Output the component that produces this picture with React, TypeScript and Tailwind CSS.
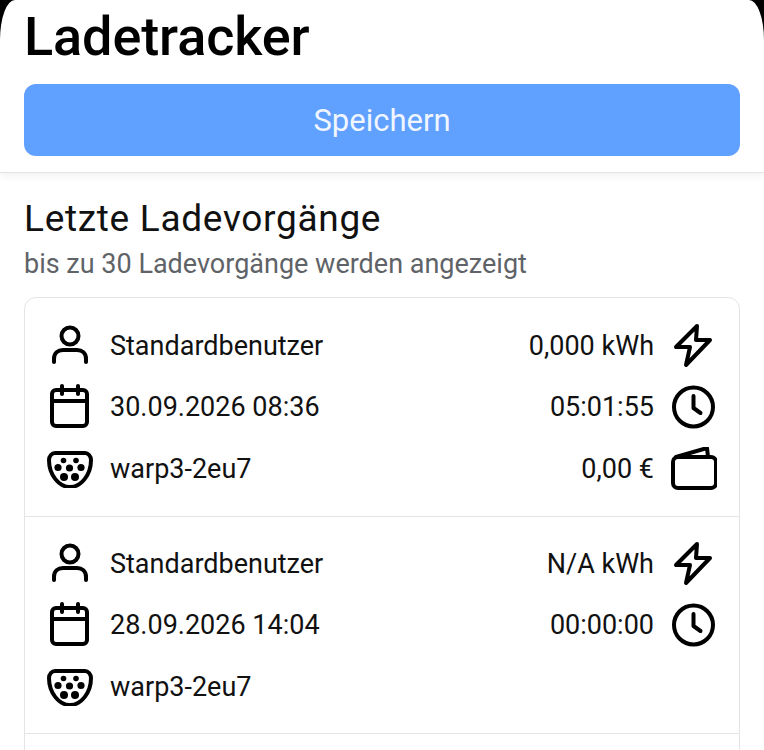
import type { ReactNode } from "react";

function UserIcon() {
  return (
    <svg width="46" height="46" viewBox="0 1 46 46" fill="none" stroke="#000" strokeWidth="4" strokeLinecap="round" strokeLinejoin="round">
      <circle cx="23" cy="14" r="8.5" />
      <path d="M7 40v-3c0-6 4-9 9-9h14c5 0 9 3 9 9v3" />
    </svg>
  );
}

function CalendarIcon() {
  return (
    <svg width="46" height="46" viewBox="0 0 46 46" fill="none" stroke="#000" strokeWidth="4" strokeLinecap="round" strokeLinejoin="round">
      <rect x="5" y="6" width="35" height="36" rx="4" />
      <path d="M5 17h35M15 2v8M31 2v8" />
    </svg>
  );
}

function ConnectorIcon() {
  return (
    <svg width="46" height="38" viewBox="0 -1 46 38" fill="none">
      <path d="M8 2h30c3 0 6 3 6 7 0 15-10 27-21 27S2 24 2 9c0-4 3-7 6-7z" stroke="#000" strokeWidth="4" />
      <g fill="#000">
        <circle cx="16.5" cy="9.5" r="2.8" />
        <circle cx="29" cy="9.5" r="2.8" />
        <circle cx="11" cy="16.5" r="3.6" />
        <circle cx="22.5" cy="17" r="3.6" />
        <circle cx="34" cy="16.5" r="3.6" />
        <circle cx="17" cy="26" r="4" />
        <circle cx="28" cy="26" r="4" />
      </g>
    </svg>
  );
}

function BoltIcon() {
  return (
    <svg width="46" height="46" viewBox="0 1 46 46" fill="none" stroke="#000" strokeWidth="4" strokeLinecap="round" strokeLinejoin="round">
      <path d="M26 4L5 25h14l-4 18 24-25H25z" />
    </svg>
  );
}

function ClockIcon() {
  return (
    <svg width="46" height="46" viewBox="0 0 46 46" fill="none" stroke="#000" strokeWidth="4" strokeLinecap="round" strokeLinejoin="round">
      <circle cx="22.5" cy="23" r="19.5" />
      <path d="M22.5 12v12l7 5" />
    </svg>
  );
}

function WalletIcon() {
  return (
    <svg width="46" height="44" viewBox="0 1 46 44" fill="none" stroke="#000" strokeWidth="4" strokeLinecap="round" strokeLinejoin="round">
      <path d="M5 11L36 2l1 9" />
      <rect x="2" y="11" width="43" height="31" rx="5" />
    </svg>
  );
}

function Row({ left, leftText, rightText, right }: { left: ReactNode; leftText: string; rightText?: string; right?: ReactNode }) {
  return (
    <div className="flex h-[61.5px] items-center">
      <div className="flex w-[46px] justify-center">{left}</div>
      <span className="ml-[17px] flex-1 text-[27px] text-[#111]">{leftText}</span>
      {rightText && <span className="text-[27px] text-[#111]">{rightText}</span>}
      <div className="ml-[17px] flex w-[46px] justify-center">{right}</div>
    </div>
  );
}

const sessions = [
  { date: "30.09.2026 08:36", energy: "0,000 kWh", time: "05:01:55", cost: "0,00 €" },
  { date: "28.09.2026 14:04", energy: "N/A kWh", time: "00:00:00" },
];

export default function App() {
  return (
    <div className="h-[750px] w-[764px] overflow-hidden bg-black font-['Roboto',sans-serif]">
      <div className="h-full rounded-t-[15px_40px] bg-white">
        <div className="h-[173px] border-b border-[#e4e4e7] px-[24px] shadow-[0_3px_8px_rgba(0,0,0,0.06)]">
          <h1 className="pt-[6px] text-[54px] leading-[62px] font-medium tracking-[-0.1px] text-black">Ladetracker</h1>
          <button className="mt-[16px] flex h-[72px] w-full items-center justify-center rounded-[12px] bg-[#60a0ff] pt-[2px] text-[31px] text-[#f0f6ff]">
            Speichern
          </button>
        </div>

        <div className="px-[24px]">
          <h2 className="mt-[24px] text-[37px] leading-[44px] text-[#111] tracking-[0.7px]">Letzte Ladevorgänge</h2>
          <p className="mt-[5px] text-[27px] leading-[36px] text-[#5f6368]">bis zu 30 Ladevorgänge werden angezeigt</p>

          <div className="mt-[15px] rounded-t-[12px] border border-[#e4e4e7]">
            {sessions.map((s, i) => (
              <div key={s.date} className={i === 0 ? "h-[219px] border-b border-[#e4e4e7] px-[22px] pt-[17px]" : "h-[217px] border-b border-[#e4e4e7] px-[22px] pt-[16px]"}>
                <Row left={<UserIcon />} leftText="Standardbenutzer" rightText={s.energy} right={<BoltIcon />} />
                <Row left={<CalendarIcon />} leftText={s.date} rightText={s.time} right={<ClockIcon />} />
                <Row left={<ConnectorIcon />} leftText="warp3-2eu7" rightText={s.cost} right={s.cost ? <WalletIcon /> : null} />
              </div>
            ))}
            <div className="h-[40px]" />
          </div>
        </div>
      </div>
    </div>
  );
}
